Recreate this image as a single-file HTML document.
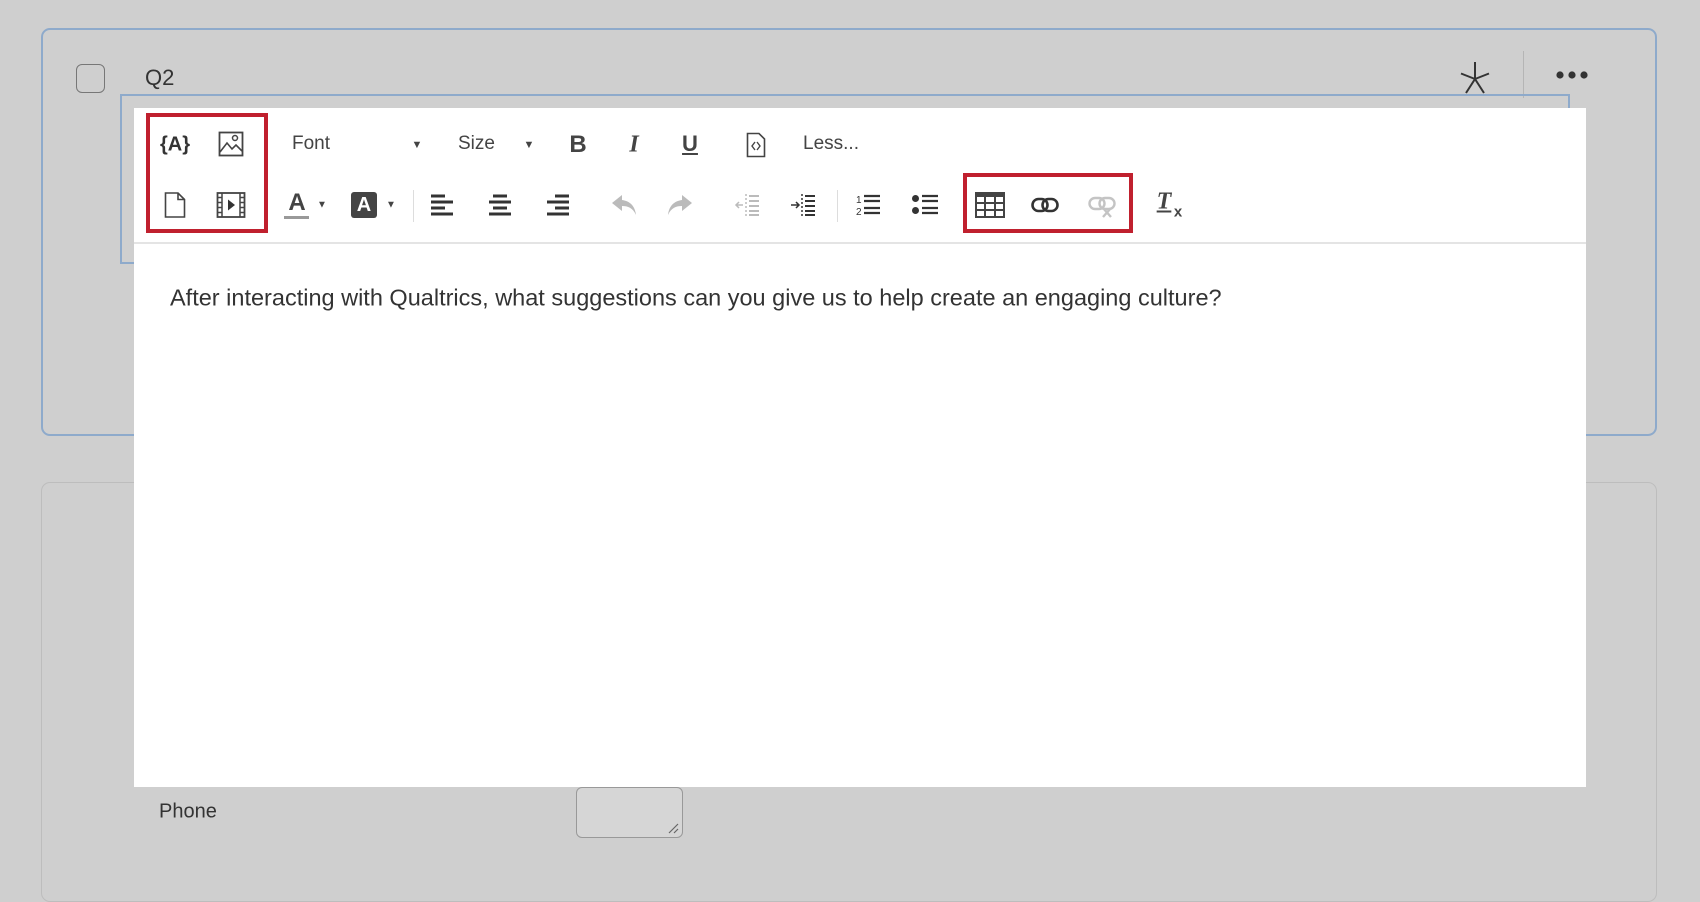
<!DOCTYPE html>
<html><head><meta charset="utf-8"><style>
*{margin:0;padding:0;box-sizing:border-box}
body{width:1700px;height:850px;background:#cfcfcf;position:relative;overflow:hidden;font-family:"Liberation Sans",Arial,sans-serif;color:#333}
.a{position:absolute}
.ic{position:absolute;transform:translate(-50%,-50%)}
.t{position:absolute;transform:translateY(-50%);font-size:19px;color:#444}
</style></head><body>
<div class="a" style="left:41px;top:28px;width:1616px;height:408px;border:2px solid #8eaacb;border-radius:9px"></div>
<div class="a" style="left:41px;top:482px;width:1616px;height:420px;border:1.5px solid #bdbdbd;border-radius:9px"></div>
<div class="a" style="left:76px;top:64px;width:29px;height:29px;border:1.5px solid #777;border-radius:6px"></div>
<div class="t" style="left:145px;top:78px;font-size:22px;color:#333">Q2</div>
<svg class="a" style="left:1459px;top:60px" width="32" height="34" viewBox="0 0 32 34"><path d="M16 2V19M16 19L2 13.5M16 19L30 13.5M16 19L7 33M16 19L25 33" stroke="#333" stroke-width="2" fill="none"/></svg>
<div class="a" style="left:1523px;top:51px;width:1px;height:47px;background:#b5b5b5"></div>
<svg class="a" style="left:1555px;top:70px" width="34" height="10" viewBox="0 0 34 10"><circle cx="5" cy="5" r="3.6" fill="#333"/><circle cx="17" cy="5" r="3.6" fill="#333"/><circle cx="29" cy="5" r="3.6" fill="#333"/></svg>
<div class="a" style="left:120px;top:94px;width:1450px;height:170px;border:2px solid #8eaacb"></div>
<div class="a" style="left:134px;top:108px;width:1452px;height:679px;background:#fff"></div>
<div class="a" style="left:134px;top:242px;width:1452px;height:2px;background:#e4e4e4"></div>
<div class="a" style="left:146px;top:113px;width:122px;height:120px;border:4px solid #c0202e"></div>
<div class="a" style="left:963px;top:173px;width:170px;height:60px;border:4px solid #c0202e"></div>

<!-- row1 -->
<div class="ic" style="left:175px;top:145px;font-size:20px;font-weight:bold;color:#333">{A}</div>
<svg class="ic" style="left:231px;top:144px" width="26" height="26" viewBox="0 0 26 26"><rect x="1.5" y="1.5" width="23" height="23" fill="none" stroke="#444" stroke-width="1.8"/><circle cx="17" cy="7" r="2.5" fill="none" stroke="#444" stroke-width="1.5"/><path d="M2 21 L9 12 L14 18 L18 14 L24 20" fill="none" stroke="#444" stroke-width="1.6"/></svg>
<div class="t" style="left:292px;top:144px">Font</div>
<div class="ic" style="left:417px;top:145px;font-size:11px;color:#444">▼</div>
<div class="t" style="left:458px;top:144px">Size</div>
<div class="ic" style="left:529px;top:145px;font-size:11px;color:#444">▼</div>
<div class="ic" style="left:578px;top:145px;font-size:24px;font-weight:bold;color:#444">B</div>
<div class="ic" style="left:634px;top:145px;font-size:24px;font-weight:bold;font-style:italic;color:#444;font-family:'Liberation Serif',serif">I</div>
<div class="ic" style="left:690px;top:144px;font-size:22px;font-weight:bold;text-decoration:underline;color:#444">U</div>
<svg class="ic" style="left:756px;top:145px" width="20" height="26" viewBox="0 0 20 26"><path d="M1.5 1.5H13L18.5 7V24.5H1.5Z" fill="none" stroke="#444" stroke-width="1.6"/><path d="M9 10L6 14L9 18M11 10L14 14L11 18" fill="none" stroke="#444" stroke-width="1.4"/></svg>
<div class="t" style="left:803px;top:144px">Less...</div>

<!-- row2 -->
<svg class="ic" style="left:175px;top:205px" width="22" height="27" viewBox="0 0 22 27"><path d="M1.5 1.5H14L20.5 8V25.5H1.5Z M14 1.5V8H20.5" fill="none" stroke="#444" stroke-width="1.6"/></svg>
<svg class="ic" style="left:231px;top:205px" width="30" height="27" viewBox="0 0 30 27"><rect x="1.5" y="1.5" width="27" height="24" fill="none" stroke="#444" stroke-width="1.8"/><path d="M6 1.5V25.5M24 1.5V25.5" stroke="#444" stroke-width="1.5"/><path d="M2 6H6M2 11H6M2 16H6M2 21H6M24 6H28M24 11H28M24 16H28M24 21H28" stroke="#444" stroke-width="1.5"/><path d="M12 8L19 13.5L12 19Z" fill="#333"/></svg>
<div class="ic" style="left:297px;top:203px;font-size:24px;font-weight:bold;color:#444">A</div>
<div class="a" style="left:284px;top:216px;width:25px;height:3px;background:#999"></div>
<div class="ic" style="left:322px;top:205px;font-size:10px;color:#444">▼</div>
<div class="ic" style="left:364px;top:205px;width:26px;height:26px;background:#444;border-radius:3px;color:#fff;font-weight:bold;font-size:20px;text-align:center;line-height:26px">A</div>
<div class="ic" style="left:391px;top:205px;font-size:10px;color:#444">▼</div>
<div class="a" style="left:413px;top:190px;width:1px;height:32px;background:#ddd"></div>
<svg class="ic" style="left:443px;top:205px" width="24" height="22" viewBox="0 0 24 22"><path d="M0 2H14M0 8H22M0 14H14M0 20H22" stroke="#333" stroke-width="3"/></svg>
<svg class="ic" style="left:500px;top:205px" width="24" height="22" viewBox="0 0 24 22"><path d="M5 2H19M1 8H23M5 14H19M1 20H23" stroke="#333" stroke-width="3"/></svg>
<svg class="ic" style="left:557px;top:205px" width="24" height="22" viewBox="0 0 24 22"><path d="M10 2H24M2 8H24M10 14H24M2 20H24" stroke="#333" stroke-width="3"/></svg>
<svg class="ic" style="left:624px;top:205px" width="26" height="22" viewBox="0 0 26 22"><path d="M11 1L1 9L11 17V12C17 12 22 14 25 21C24 12 19 7 11 6Z" fill="#bbb"/></svg>
<svg class="ic" style="left:680px;top:205px" width="26" height="22" viewBox="0 0 26 22"><path d="M15 1L25 9L15 17V12C9 12 4 14 1 21C2 12 7 7 15 6Z" fill="#bbb"/></svg>
<svg class="ic" style="left:747px;top:205px" width="26" height="24" viewBox="0 0 26 24"><path d="M12 1V23" stroke="#bbb" stroke-width="1.5" stroke-dasharray="2 2"/><path d="M15 3H25M15 8H25M15 13H25M15 18H25M15 22H25" stroke="#bbb" stroke-width="2"/><path d="M9 12H2M5 9L2 12L5 15" fill="none" stroke="#bbb" stroke-width="1.5"/></svg>
<svg class="ic" style="left:803px;top:205px" width="26" height="24" viewBox="0 0 26 24"><path d="M12 1V23" stroke="#333" stroke-width="1.5" stroke-dasharray="2 2"/><path d="M15 3H25M15 8H25M15 13H25M15 18H25M15 22H25" stroke="#333" stroke-width="2"/><path d="M1 12H9M6 9L9 12L6 15" fill="none" stroke="#333" stroke-width="1.5"/></svg>
<div class="a" style="left:837px;top:190px;width:1px;height:32px;background:#ddd"></div>
<svg class="ic" style="left:868px;top:205px" width="24" height="24" viewBox="0 0 24 24"><text x="0" y="10" font-size="10" fill="#333" font-family="Liberation Sans">1</text><text x="0" y="22" font-size="10" fill="#333" font-family="Liberation Sans">2</text><path d="M8 3H24M8 8H24M8 15H24M8 20H24" stroke="#333" stroke-width="2.2"/></svg>
<svg class="ic" style="left:925px;top:205px" width="26" height="24" viewBox="0 0 26 24"><circle cx="3.5" cy="5.5" r="3.5" fill="#333"/><circle cx="3.5" cy="17.5" r="3.5" fill="#333"/><path d="M10 3H26M10 8H26M10 15H26M10 20H26" stroke="#333" stroke-width="2.2"/></svg>
<svg class="ic" style="left:990px;top:205px" width="30" height="26" viewBox="0 0 30 26"><rect x="0" y="0" width="30" height="5" fill="#444"/><rect x="1" y="1" width="28" height="24" fill="none" stroke="#444" stroke-width="2"/><path d="M1 11H29M1 18H29M10 5V25M20 5V25" stroke="#444" stroke-width="2"/></svg>
<svg class="ic" style="left:1045px;top:205px" width="28" height="16" viewBox="0 0 28 16"><rect x="1.5" y="2" width="15" height="12" rx="6" fill="none" stroke="#333" stroke-width="2.6"/><rect x="11.5" y="2" width="15" height="12" rx="6" fill="none" stroke="#333" stroke-width="2.6"/></svg>
<svg class="ic" style="left:1102px;top:207px" width="28" height="22" viewBox="0 0 28 22"><rect x="1.5" y="2" width="15" height="11" rx="5.5" fill="none" stroke="#c4c4c4" stroke-width="2.4"/><rect x="11.5" y="2" width="15" height="11" rx="5.5" fill="none" stroke="#c4c4c4" stroke-width="2.4"/><path d="M15 12L23 21M23 12L15 21" stroke="#c4c4c4" stroke-width="2.4"/></svg>
<div class="ic" style="left:1164px;top:202px;font-size:24px;font-weight:bold;font-style:italic;color:#444;text-decoration:underline;font-family:'Liberation Serif',serif">T</div>
<div class="ic" style="left:1178px;top:212px;font-size:15px;font-weight:bold;color:#444">x</div>

<div class="t" style="left:170px;top:298px;font-size:23.5px;color:#333">After interacting with Qualtrics, what suggestions can you give us to help create an engaging culture?</div>

<div class="t" style="left:159px;top:812px;font-size:20px;color:#333">Phone</div>
<div class="a" style="left:576px;top:787px;width:107px;height:51px;border:1.5px solid #999;border-radius:6px;background:#d6d6d6"></div>
<svg class="a" style="left:667px;top:822px" width="12" height="12" viewBox="0 0 12 12"><path d="M11 2L2 11M11 7L7 11" stroke="#666" stroke-width="1.2"/></svg>
</body></html>
